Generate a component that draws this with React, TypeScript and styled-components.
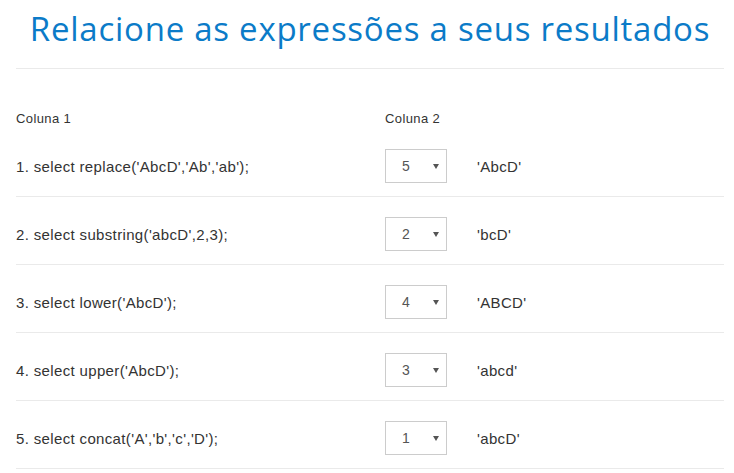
import React from "react"
import styled, { createGlobalStyle } from "styled-components"

const rows = [
  { expr: "1. select replace('AbcD','Ab','ab');", choice: "5", result: "'AbcD'" },
  { expr: "2. select substring('abcD',2,3);", choice: "2", result: "'bcD'" },
  { expr: "3. select lower('AbcD');", choice: "4", result: "'ABCD'" },
  { expr: "4. select upper('AbcD');", choice: "3", result: "'abcd'" },
  { expr: "5. select concat('A','b','c','D');", choice: "1", result: "'abcD'" },
]

const Global = createGlobalStyle`
  body {
    margin: 0;
    background: #fff;
    font-family: "Liberation Sans", Arial, sans-serif;
    color: #333;
  }
`

export default function App() {
  return (
    <Page>
      <Global />
      <Header>
        <Title>Relacione as expressões a seus resultados</Title>
      </Header>
      <Grid>
        <HeadCell>Coluna 1</HeadCell>
        <HeadCell>Coluna 2</HeadCell>
        <HeadCell />
        {rows.map((r) => (
          <React.Fragment key={r.expr}>
            <Cell>{r.expr}</Cell>
            <Cell>
              <Select>
                <span>{r.choice}</span>
                <Arrow />
              </Select>
            </Cell>
            <Cell>{r.result}</Cell>
          </React.Fragment>
        ))}
      </Grid>
    </Page>
  )
}

const Page = styled.div`
  padding: 0 10px 0 16px;
`

const Header = styled.div`
  border-bottom: 1px solid #eaeaea;
  padding: 5px 0 15px;
  text-align: center;
`

const Title = styled.h1`
  margin: 0;
  font-family: "Open Sans", Lato, sans-serif;
  font-weight: 400;
  font-size: 33px;
  letter-spacing: 0.75px;
  line-height: 48px;
  color: #0b7bc8;
`

const Grid = styled.div`
  display: grid;
  grid-template-columns: 369px 92px 1fr;
`

const HeadCell = styled.div`
  font-size: 13px;
  letter-spacing: 0.4px;
  line-height: 17px;
  padding: 41px 0 2px;
`

const Cell = styled.div`
  display: flex;
  align-items: center;
  font-size: 15px;
  letter-spacing: 0.35px;
  padding: 20px 0 13px;
  min-height: 34px;
  border-bottom: 1px solid #eaeaea;
`

const Select = styled.div`
  box-sizing: border-box;
  width: 62px;
  height: 34px;
  border: 1px solid #ccc;
  display: flex;
  align-items: center;
  justify-content: space-between;
  padding: 0 7px 0 16px;
  font-size: 14px;
  letter-spacing: 0;
  color: #555;
`

const Arrow = styled.span`
  width: 0;
  height: 0;
  border-left: 3px solid transparent;
  border-right: 3px solid transparent;
  border-top: 5px solid #555;
`
